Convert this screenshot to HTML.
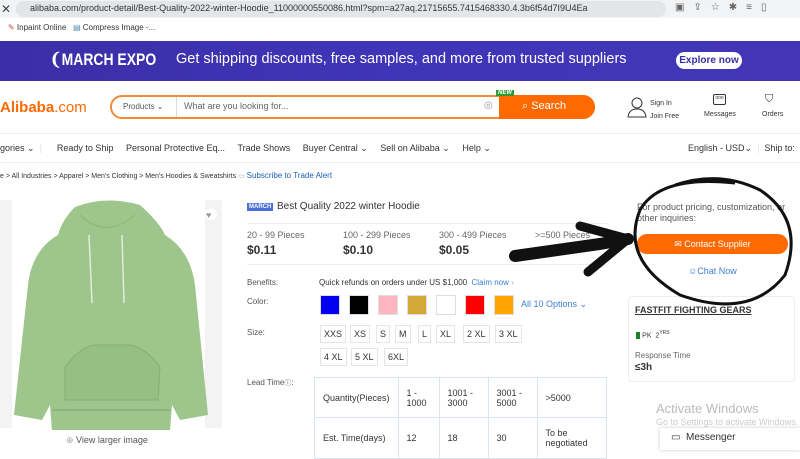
<!DOCTYPE html>
<html><head><meta charset="utf-8"><style>
*{margin:0;padding:0;box-sizing:border-box}
body{width:800px;height:450px;overflow:hidden;position:relative;font-family:"Liberation Sans",sans-serif;background:#fff;color:#333}
.a{position:absolute;white-space:nowrap}
.sw{position:absolute;top:295px;width:20px;height:20px;border:1px solid #ddd}
.sz{position:absolute;height:18px;border:1px solid #e5e5e5;font-size:9px;color:#333;text-align:center;line-height:16px;padding:0 3px}
td{border:1px solid #dbe3ef;font-size:9px;padding:0 8px;color:#333}
</style></head><body>
<div class="a" style="left:0;top:0;width:800px;height:18px;background:#f1f3f4"></div>
<div class="a" style="left:1px;top:2px;font-size:12px;color:#444">✕</div>
<div class="a" style="left:16px;top:1px;width:650px;height:16px;border-radius:8px;background:#e3e6e9"></div>
<div class="a" style="left:30px;top:3px;font-size:9px;color:#333">alibaba.com/product-detail/Best-Quality-2022-winter-Hoodie_11000000550086.html?spm=a27aq.21715655.7415468330.4.3b6f54d7I9U4Ea</div>
<div class="a" style="left:675px;top:2px;font-size:10px;color:#666;letter-spacing:9px">▣⇪☆✱≡▯</div>
<div class="a" style="left:8px;top:23px;font-size:8px;color:#333"><span style="color:#c44">✎</span> Inpaint Online &nbsp;&nbsp;<span style="color:#58a">▤</span> Compress Image -...</div>
<div class="a" style="left:0;top:41px;width:800px;height:40px;background:linear-gradient(90deg,#3b2ea6,#3f35b8 50%,#4236b5)"></div>
<div class="a" style="left:50px;top:50px;font-size:17px;font-weight:bold;color:#fff;transform:scaleX(0.82);transform-origin:0 0">❨MARCH EXPO</div>
<div class="a" style="left:176px;top:51px;font-size:14.5px;color:#fff">Get shipping discounts, free samples, and more from trusted suppliers</div>
<div class="a" style="left:676px;top:52px;width:66px;height:17px;border-radius:9px;background:#fff;color:#3b2ea6;font-size:10px;font-weight:bold;text-align:center;line-height:17px">Explore now</div>
<div class="a" style="left:0;top:99px;font-size:15px;color:#ff6a00;font-weight:bold">Alibaba<span style="font-weight:normal">.com</span></div>
<div class="a" style="left:110px;top:95px;width:485px;height:24px;border:2px solid #f08a3a;border-radius:12px;background:#fff"></div>
<div class="a" style="left:123px;top:102px;font-size:8px;color:#555">Products ⌄</div>
<div class="a" style="left:176px;top:97px;width:1px;height:20px;background:#ddd"></div>
<div class="a" style="left:184px;top:101px;font-size:9px;color:#666">What are you looking for...</div>
<div class="a" style="left:484px;top:100px;font-size:10px;color:#999">◎</div>
<div class="a" style="left:499px;top:95px;width:96px;height:24px;border-radius:0 12px 12px 0;background:#ff6a00"></div>
<div class="a" style="left:522px;top:100px;font-size:11px;color:#fff">⌕ Search</div>
<div class="a" style="left:496px;top:90px;font-size:6px;color:#fff;background:#2f9c2f;padding:0 2px;font-style:italic;font-weight:bold">NEW</div>
<svg class="a" style="left:627px;top:96px" width="20" height="22"><circle cx="10" cy="7" r="5" fill="none" stroke="#333"/><path d="M1 21 Q2 13 10 13 Q18 13 19 21 Z" fill="none" stroke="#333"/></svg>
<div class="a" style="left:650px;top:97px;font-size:7px;color:#333;line-height:13px">Sign In<br>Join Free</div>
<div class="a" style="left:713px;top:94px;width:13px;height:11px;border:1px solid #333;border-radius:2px;font-size:5px;text-align:center">ooo</div>
<div class="a" style="left:704px;top:111px;font-size:7px;color:#333">Messages</div>
<div class="a" style="left:765px;top:93px;font-size:11px;color:#333">⛉</div>
<div class="a" style="left:762px;top:111px;font-size:7px;color:#333">Orders</div>
<div class="a" style="left:0;top:133px;width:800px;height:1px;background:#f0f0f0"></div>
<div class="a" style="left:0;top:143px;font-size:9px;color:#333">gories ⌄ <span style="color:#ddd">&nbsp;|&nbsp;</span>&nbsp;&nbsp;&nbsp;&nbsp;&nbsp;Ready to Ship &nbsp;&nbsp;&nbsp;&nbsp;Personal Protective Eq... &nbsp;&nbsp;&nbsp;&nbsp;Trade Shows &nbsp;&nbsp;&nbsp;&nbsp;Buyer Central ⌄ &nbsp;&nbsp;&nbsp;&nbsp;Sell on Alibaba ⌄ &nbsp;&nbsp;&nbsp;&nbsp;Help ⌄</div>
<div class="a" style="left:688px;top:143px;font-size:9px;color:#333">English - USD⌄ <span style="color:#ddd">&nbsp;|&nbsp;</span> Ship to:</div>
<div class="a" style="left:0;top:162px;width:800px;height:1px;background:#f0f0f0"></div>
<div class="a" style="left:0;top:171px;font-size:7px;color:#333">e &gt; All Industries &gt; Apparel &gt; Men's Clothing &gt; Men's Hoodies &amp; Sweatshirts <span style="color:#aaa">▭</span> <span style="color:#1a5fb4;font-size:8px">Subscribe to Trade Alert</span></div>
<div class="a" style="left:0;top:200px;width:222px;height:228px;background:#f3f3f3"></div>
<div class="a" style="left:12px;top:200px;width:193px;height:228px;background:#fff"></div>
<svg class="a" style="left:0;top:195px" width="222" height="240" viewBox="0 0 222 240">
<path d="M75 12 Q105 0 140 10 Q160 28 165 40 Q190 55 195 90 L208 220 L180 225 L172 210 L170 235 L52 235 L50 210 L42 225 L14 220 L28 90 Q32 55 58 40 Q62 25 75 12 Z" fill="#9ec58c"/>
<path d="M65 172 Q80 152 95 150 L130 150 Q145 152 160 172 L158 205 L65 205 Z" fill="#96bf84" stroke="#86ad76"/>
<path d="M52 215 L170 215" stroke="#88ae78" stroke-width="1.5"/>
<path d="M80 20 Q105 45 135 20" stroke="#8cb47b" fill="none"/>
<path d="M89 40 L92 108 M122 40 L124 108" stroke="#e3ecda" stroke-width="1.5"/>
<circle cx="211" cy="19" r="6" fill="#fff"/><text x="206" y="23" font-size="9" fill="#999">♥</text>
</svg>
<div class="a" style="left:66px;top:435px;font-size:9px;color:#555"><span style="color:#aaa">⊕</span> View larger image</div>
<div class="a" style="left:247px;top:203px;font-size:6px;color:#fff;background:#4a6fd9;padding:1px 2px;font-weight:bold">MARCH</div>
<div class="a" style="left:277px;top:201px;font-size:10px;color:#333">Best Quality 2022 winter Hoodie</div>
<div class="a" style="left:247px;top:223px;width:360px;height:1px;background:#eee"></div>
<div class="a" style="left:247px;top:230px;font-size:9px;color:#666">20 - 99 Pieces</div>
<div class="a" style="left:343px;top:230px;font-size:9px;color:#666">100 - 299 Pieces</div>
<div class="a" style="left:439px;top:230px;font-size:9px;color:#666">300 - 499 Pieces</div>
<div class="a" style="left:535px;top:230px;font-size:9px;color:#666">&gt;=500 Pieces</div>
<div class="a" style="left:247px;top:243px;font-size:12px;font-weight:bold;color:#333">$0.11</div>
<div class="a" style="left:343px;top:243px;font-size:12px;font-weight:bold;color:#333">$0.10</div>
<div class="a" style="left:439px;top:243px;font-size:12px;font-weight:bold;color:#333">$0.05</div>
<div class="a" style="left:247px;top:264px;width:360px;height:1px;background:#eee"></div>
<div class="a" style="left:247px;top:278px;font-size:8px;color:#555">Benefits:</div>
<div class="a" style="left:319px;top:278px;font-size:8px;color:#333">Quick refunds on orders under US $1,000 &nbsp;<span style="color:#3b7dd8">Claim now</span> <span style="color:#aaa">›</span></div>
<div class="a" style="left:247px;top:297px;font-size:8px;color:#555">Color:</div>
<div class="sw" style="left:320px;background:#0000f0"></div>
<div class="sw" style="left:349px;background:#000"></div>
<div class="sw" style="left:378px;background:#ffb6c1"></div>
<div class="sw" style="left:407px;background:#d4a838"></div>
<div class="sw" style="left:436px;background:#fff"></div>
<div class="sw" style="left:465px;background:#f00"></div>
<div class="sw" style="left:494px;background:#ffa500"></div>
<div class="a" style="left:521px;top:299px;font-size:9px;color:#3b7dd8">All 10 Options ⌄</div>
<div class="a" style="left:247px;top:328px;font-size:8px;color:#555">Size:</div>
<div class="sz" style="left:320px;top:325px">XXS</div>
<div class="sz" style="left:350px;top:325px">XS</div>
<div class="sz" style="left:376px;top:325px">S</div>
<div class="sz" style="left:395px;top:325px">M</div>
<div class="sz" style="left:418px;top:325px">L</div>
<div class="sz" style="left:436px;top:325px">XL</div>
<div class="sz" style="left:463px;top:325px">2 XL</div>
<div class="sz" style="left:495px;top:325px">3 XL</div>
<div class="sz" style="left:320px;top:348px">4 XL</div>
<div class="sz" style="left:351px;top:348px">5 XL</div>
<div class="sz" style="left:384px;top:348px">6XL</div>
<div class="a" style="left:247px;top:378px;font-size:8px;color:#555">Lead Time<span style="font-size:7px">ⓘ</span>:</div>
<table class="a" style="left:314px;top:377px;border-collapse:collapse;width:293px;height:82px">
<tr style="height:40px"><td style="width:82px">Quantity(Pieces)</td><td style="width:41px">1 -<br>1000</td><td style="width:49px">1001 -<br>3000</td><td style="width:49px">3001 -<br>5000</td><td>&gt;5000</td></tr>
<tr><td>Est. Time(days)</td><td>12</td><td>18</td><td>30</td><td>To be<br>negotiated</td></tr>
</table>
<div class="a" style="left:637px;top:202px;font-size:9px;color:#555;line-height:11px">For product pricing, customization, or<br>other inquiries:</div>
<div class="a" style="left:637px;top:234px;width:151px;height:20px;border-radius:10px;background:#ff6a00;color:#fff;font-size:9px;text-align:center;line-height:20px">✉ Contact Supplier</div>
<div class="a" style="left:688px;top:266px;font-size:9px;color:#3b7dd8">☺Chat Now</div>
<div class="a" style="left:628px;top:296px;width:167px;height:86px;border:1px solid #eee;border-radius:4px"></div>
<div class="a" style="left:635px;top:305px;font-size:9px;font-weight:bold;color:#333;text-decoration:underline">FASTFIT FIGHTING GEARS</div>
<div class="a" style="left:636px;top:330px;font-size:7px;color:#333"><span style="background:#1a7f2a;color:#1a7f2a">■</span> PK &nbsp;2<sup style="font-size:5px">YRS</sup></div>
<div class="a" style="left:635px;top:351px;font-size:8px;color:#666">Response Time</div>
<div class="a" style="left:635px;top:362px;font-size:10px;font-weight:bold;color:#333">≤3h</div>
<div class="a" style="left:656px;top:401px;font-size:13px;color:#bbb">Activate Windows</div>
<div class="a" style="left:656px;top:417px;font-size:9px;color:#ccc">Go to Settings to activate Windows.</div>
<div class="a" style="left:660px;top:428px;width:140px;height:22px;background:#fff;box-shadow:0 0 4px rgba(0,0,0,.2)"></div>
<div class="a" style="left:671px;top:432px;font-size:10px;color:#333">▭ &nbsp;Messenger</div>
<svg class="a" style="left:0;top:0" width="800" height="450">
<path d="M515 256 L600 244 L628 239" stroke="#111" stroke-width="12" fill="none" stroke-linecap="round"/>
<path d="M580 226 L628 239 L588 272" stroke="#111" stroke-width="9" fill="none" stroke-linecap="round" stroke-linejoin="round"/>
<path d="M735 183 Q660 175 640 210 Q620 260 680 295 Q750 320 785 275 Q805 220 760 190 Q720 170 675 185" stroke="#111" stroke-width="3" fill="none"/>
</svg>
</body></html>
